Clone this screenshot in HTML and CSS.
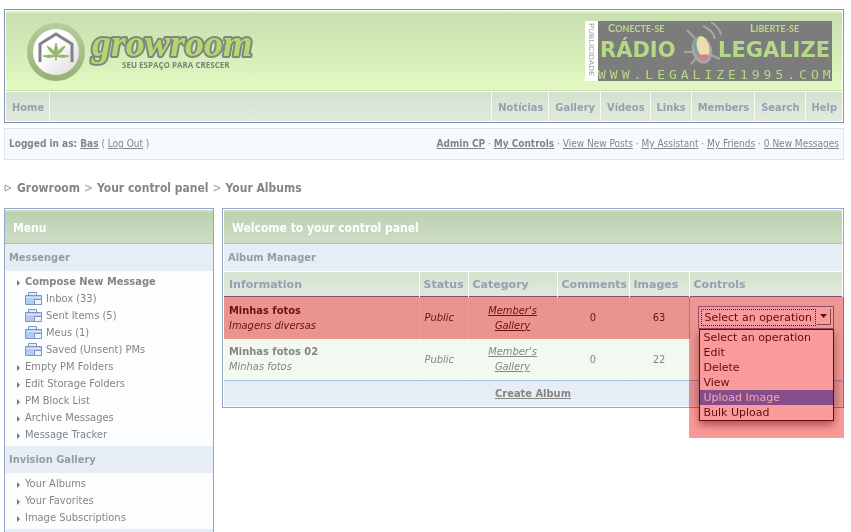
FILE: index.html
```html
<!DOCTYPE html>
<html lang="en">
<head>
<meta charset="utf-8">
<title>Growroom - Your Albums</title>
<link rel="stylesheet" href="styles.css">
</head>
<body>
<header class="masthead">
  <div class="banner">
    <a class="logo" href="#" aria-label="Growroom">
      <svg width="240" height="70" viewBox="0 0 240 70">
        <defs>
          <linearGradient id="ring" x1="0" y1="0" x2="0" y2="1"><stop offset="0" stop-color="#b5cc9b"/><stop offset="1" stop-color="#98b276"/></linearGradient>
          <linearGradient id="disc" x1="0" y1="0" x2="1" y2="1"><stop offset="0.4" stop-color="#fff"/><stop offset="1" stop-color="#d5d5d5"/></linearGradient>
        </defs>
        <circle cx="30" cy="35" r="26" fill="url(#disc)" stroke="url(#ring)" stroke-width="6"/>
        <path d="M14 45V27L30 17L46 27V45" fill="none" stroke="#828286" stroke-width="3"/>
        <path d="M30 39Q27 33 30 26Q33 33 30 39ZM30 39Q23 35 21 29Q28 32 30 39ZM30 39Q37 35 39 29Q32 32 30 39ZM30 39Q23 42 17 39Q24 37 30 39ZM30 39Q37 42 43 39Q36 37 30 39ZM29.500 39H30.500V43H29.500Z" fill="#94b96b" stroke="#94b96b"/>
        <text class="wordmark" x="66" y="39">growroom</text>
        <text class="tagline" x="96" y="51">SEU ESPAÇO PARA CRESCER</text>
      </svg>
    </a>
    <a class="ad" href="#" aria-label="Rádio Legalize">
      <svg width="250" height="60" viewBox="0 0 250 60">
        <path fill="#fff" d="M0 0H13V60H0Z"/>
        <path fill="#7c7c7c" d="M13 0H247V60H13Z"/>
        <text class="ad-side" transform="translate(4 2) rotate(90)">PUBLICIDADE</text>
        <text class="ad-small" x="23" y="11">C<tspan class="sc">ONECTE-SE</tspan></text>
        <text class="ad-small" x="165" y="11">L<tspan class="sc">IBERTE-SE</tspan></text>
        <g fill="none" stroke="#a6a6a6" stroke-width="2"><path d="M102 9L111 18M99 31H110M106 43L112 36M124 33L135 38M118 5Q128 9 130 18M126 1Q135 7 136 14"/></g>
        <ellipse cx="117" cy="29" rx="10" ry="14" fill="#a6a6a6" transform="rotate(-15 117 29)"/>
        <ellipse cx="116" cy="27" rx="7" ry="12" fill="#7fa09b" transform="rotate(-15 116 27)"/>
        <ellipse cx="118" cy="26" rx="6" ry="11" fill="#eddcae" transform="rotate(-15 118 26)"/>
        <path d="M113 35Q118 32 124 34Q123 41 117 40Q113 38 113 35Z" fill="#cf8295"/>
        <text class="ad-big" x="15" y="36">RÁDIO</text>
        <text class="ad-big" x="133" y="36">LEGALIZE</text>
        <text class="ad-url" x="13" y="58">WWW.LEGALIZE1995.COM</text>
      </svg>
    </a>
  </div>
  <nav class="nav">
    <a class="home" href="#">Home</a>
    <a href="#">Notícias</a><a href="#">Gallery</a><a href="#">Vídeos</a><a href="#">Links</a><a href="#">Members</a><a href="#">Search</a><a href="#">Help</a>
  </nav>
</header>

<div class="userbar">
  <p><b>Logged in as: <a href="#">Bas</a></b> ( <a href="#">Log Out</a> )</p>
  <p><b><a href="#">Admin CP</a></b> · <b><a href="#">My Controls</a></b> · <a href="#">View New Posts</a> · <a href="#">My Assistant</a> · <a href="#">My Friends</a> · <a href="#">0 New Messages</a></p>
</div>

<nav class="crumbs">
  <svg width="8" height="8" viewBox="0 0 8 8"><path d="M1 1L7 4L1 7Z" fill="none" stroke="#999"/></svg>
  <a href="#">Growroom</a><i>&gt;</i><a href="#">Your control panel</a><i>&gt;</i><a href="#">Your Albums</a>
</nav>

<svg class="defs" width="0" height="0">
  <symbol id="folder" viewBox="0 0 18 14"><path d="M3.500 3.500V.500H11.500V3.500" fill="#e4edfa" stroke="#7f96c4"/><path d="M.500 3.500H16.500V12.500H.500Z" fill="#b2cbf2" stroke="#7f96c4"/><path d="M1 5.500H16" stroke="#dce8fa"/><path d="M9.500 7.500H16.500V12.500H9.500Z" fill="#eef4fd" stroke="#7f96c4"/></symbol>
</svg>

<div class="columns">
  <aside class="panel side">
    <h2 class="title">Menu</h2>
    <h3 class="sub">Messenger</h3>
    <ul class="menu">
      <li class="arrow"><a href="#"><b>Compose New Message</b></a></li>
      <li class="box"><svg><use href="#folder"/></svg><a href="#">Inbox (33)</a></li>
      <li class="box"><svg><use href="#folder"/></svg><a href="#">Sent Items (5)</a></li>
      <li class="box"><svg><use href="#folder"/></svg><a href="#">Meus (1)</a></li>
      <li class="box"><svg><use href="#folder"/></svg><a href="#">Saved (Unsent) PMs</a></li>
      <li class="arrow"><a href="#">Empty PM Folders</a></li>
      <li class="arrow"><a href="#">Edit Storage Folders</a></li>
      <li class="arrow"><a href="#">PM Block List</a></li>
      <li class="arrow"><a href="#">Archive Messages</a></li>
      <li class="arrow"><a href="#">Message Tracker</a></li>
    </ul>
    <h3 class="sub">Invision Gallery</h3>
    <ul class="menu">
      <li class="arrow"><a href="#">Your Albums</a></li>
      <li class="arrow"><a href="#">Your Favorites</a></li>
      <li class="arrow"><a href="#">Image Subscriptions</a></li>
    </ul>
    <div class="sub"></div>
  </aside>

  <main class="panel content">
    <h2 class="title">Welcome to your control panel</h2>
    <h3 class="sub">Album Manager</h3>
    <table class="albums">
      <colgroup><col class="c-info"><col class="c-status"><col class="c-cat"><col class="c-com"><col class="c-img"><col></colgroup>
      <thead><tr><th>Information</th><th>Status</th><th>Category</th><th>Comments</th><th>Images</th><th>Controls</th></tr></thead>
      <tbody>
        <tr class="marked">
          <td><b>Minhas fotos</b><br><em>Imagens diversas</em></td>
          <td><em>Public</em></td>
          <td class="mid"><a href="#"><em>Member's<br>Gallery</em></a></td>
          <td class="mid">0</td>
          <td class="mid">63</td>
          <td class="controls">
            <div class="highlight"></div>
            <div class="picker">
              <select aria-label="Operation for Minhas fotos"><option>Select an operation</option></select>
              <svg class="drop" width="14" height="16" viewBox="0 0 14 16"><path d="M13.500 0V15.500H0" fill="none" stroke="#84464d"/><path d="M3 5H10L6.500 9Z" fill="#650a12"/></svg>
              <ul class="options" role="listbox" aria-label="Operations">
                <li role="option">Select an operation</li>
                <li role="option">Edit</li>
                <li role="option">Delete</li>
                <li role="option">View</li>
                <li role="option" class="on" aria-selected="true">Upload Image</li>
                <li role="option">Bulk Upload</li>
              </ul>
            </div>
          </td>
        </tr>
        <tr>
          <td><b>Minhas fotos 02</b><br><em>Minhas fotos</em></td>
          <td><em>Public</em></td>
          <td class="mid"><a href="#"><em>Member's<br>Gallery</em></a></td>
          <td class="mid">0</td>
          <td class="mid">22</td>
          <td></td>
        </tr>
      </tbody>
    </table>
    <div class="create"><a href="#">Create Album</a></div>
  </main>
</div>
</body>
</html>
```
FILE: styles.css
```css
* { box-sizing: border-box; }
html { height: 100%; overflow: hidden; }
body {
  margin: 0;
  padding: 9px 7px 0 4px;
  background: #fff;
  color: #858585;
  font: 11px/15px "DejaVu Sans Condensed", "DejaVu Sans", sans-serif;
  font-stretch: condensed;
  height: 100%;
  overflow: hidden;
}
a { color: inherit; }
h2, h3, p, ul { margin: 0; padding: 0; }
ul { list-style: none; }
svg { display: block; flex: none; }
.defs { position: absolute; }

.masthead { border: 1px solid #8191b9; padding: 1px; }
.banner {
  height: 80px;
  display: flex;
  justify-content: space-between;
  align-items: flex-start;
  padding: 4px 7px 0 20px;
  border-bottom: 1px solid #c9dcae;
  border-top: 2px solid #dff5ba;
  background: linear-gradient(#c8dfae, #e2f9c2);
}
.ad { margin-top: 4px; }
.wordmark {
  font: italic bold 38px "Liberation Serif", serif;
  fill: #b2d970;
  stroke: #828682;
  stroke-width: 4px;
  paint-order: stroke;
  stroke-linejoin: round;
}
.tagline { font: bold 8px "Open Sans", sans-serif; fill: #7c8576; }
.ad-side { font: 8px "Liberation Sans", sans-serif; fill: #999; }
.ad-small { font: bold 11px Lato, sans-serif; fill: #bcd98b; }
.ad-small .sc { font-size: 9px; }
.ad-big { font: bold 21px "DejaVu Sans", sans-serif; fill: #b6d986; }
.ad-url { font: 13px "DejaVu Sans Mono", monospace; letter-spacing: 4px; fill: #b6d986; }

.nav {
  display: flex;
  height: 30px;
  border-top: 1px solid #fff;
  background: linear-gradient(#d5e1cf, #e1ebdd);
}
.nav a {
  padding: 0 5px 0 6px;
  border-left: 1px solid #f7faf7;
  font-weight: bold;
  line-height: 32px;
  color: #969fb0;
  text-decoration: none;
}
.nav .home { margin-right: auto; border-left: 0; border-right: 1px solid #f7faf7; }

.userbar {
  display: flex;
  justify-content: space-between;
  margin-top: 5px;
  padding: 0 4px;
  border: 1px solid #dbe4ef;
  background: #f6f9fd;
  font-size: 10px;
  line-height: 30px;
}
.userbar p { white-space: nowrap; }

.crumbs {
  display: flex;
  align-items: center;
  height: 16px;
  margin: 20px 0 12px;
  font-size: 12px;
  font-weight: bold;
}
.crumbs a { text-decoration: none; }
.crumbs svg { margin-right: 5px; }
.crumbs i { margin: 0 4px; font-style: normal; color: #b5b5b5; }

.columns { display: flex; gap: 8px; align-items: flex-start; }
.panel { border: 1px solid #93a6ca; padding-top: 1px; background: #fbfdff; }
.side { width: 210px; flex: none; }
.content { flex: 1; min-width: 0; padding: 1px; background: #fff; }
.title {
  height: 34px;
  padding-left: 8px;
  border-top: 2px solid #cbdcc5;
  border-bottom: 1px solid #a7bbd8;
  background: linear-gradient(#bbd1b1, #cdddc5);
  color: #fff;
  font-size: 12px;
  line-height: 32px;
}
.sub {
  height: 27px;
  padding-left: 4px;
  background: #e7edf5;
  color: #939baa;
  font-size: 11px;
  line-height: 28px;
}

.menu { padding: 2px 0 3px 20px; }
.menu li { display: flex; align-items: center; height: 17px; }
.menu a { text-decoration: none; }
.menu .box svg { width: 18px; height: 14px; margin-right: 3px; }
.arrow::before {
  content: "";
  margin: 2px 5px 0 -8px;
  border: 3px solid transparent;
  border-left-color: #777;
  border-right: 0;
}

.albums { width: 100%; border-collapse: collapse; table-layout: fixed; }
.c-info { width: 195px; }
.c-status { width: 49px; }
.c-cat { width: 89px; }
.c-com { width: 72px; }
.c-img { width: 60px; }
th {
  height: 25px;
  padding: 0 0 0 4px;
  border-top: 1px solid #fff;
  border-left: 1px solid #fff;
  background: linear-gradient(#d5e1cf, #e1e9dd);
  color: #969fb0;
  font: bold 11px "DejaVu Sans", sans-serif;
  text-align: left;
}
td { height: 41px; padding: 0 5px; border-left: 1px solid #f8fcf8; background: #f1f9f1; }
th:first-child, td:first-child { padding-left: 5px; border-left: 0; }
.mid { text-align: center; }
.marked td { height: 42px; border-top: 1px solid #8f4a72; border-left-color: #ec9c95; background: #e9958e; color: #720d13; }
.marked .controls { position: relative; padding: 0 8px; background: #f1f9f1; }
.highlight {
  position: absolute;
  top: 0;
  left: -1px;
  right: -2px;
  height: 141px;
  background: #f99a99;
  mix-blend-mode: multiply;
}
.picker {
  position: relative;
  width: 136px;
  font: 11px/15px "DejaVu Sans", sans-serif;
  color: #650a12;
}
.picker select {
  display: block;
  width: 100%;
  height: 23px;
  padding: 0 6px;
  appearance: none;
  border: 1px solid #96496f;
  border-radius: 0;
  background: #fa9b9b;
  color: inherit;
  font: inherit;
}
.picker::after {
  content: "";
  position: absolute;
  inset: 3px 18px 3px 3px;
  border: 1px dotted #650a12;
  pointer-events: none;
}
.drop { position: absolute; top: 3px; right: 3px; }
.options {
  position: absolute;
  top: 23px;
  left: 1px;
  right: 0;
  border: 1px solid #650a12;
  background: #fa9b9b;
  box-shadow: 0 4px 8px #64141488;
}
.options li { padding-left: 4px; }
.options .on { background: #834e8a; color: #f9a5aa; }

.create {
  height: 26px;
  border-top: 1px solid #a7bbd8;
  background: #e7edf5;
  font-weight: bold;
  line-height: 26px;
  text-align: center;
}
```
